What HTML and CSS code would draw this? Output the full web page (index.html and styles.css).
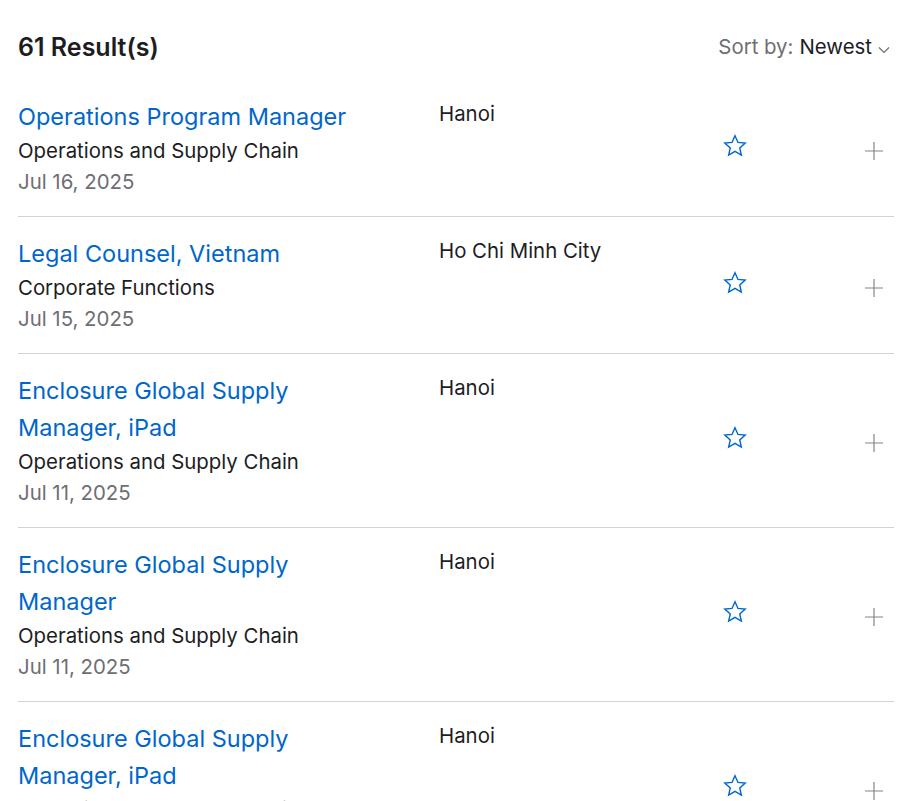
FILE: index.html
```html
<!DOCTYPE html>
<html lang="en">
<head>
  <meta charset="UTF-8" />
  <meta name="viewport" content="width=device-width, initial-scale=1.0"/>
  <title>Results</title>
  <link rel="stylesheet" href="styles.css">
</head>
<body>

<div class="results">
  <!-- Header -->
  <div class="results-head">
    <h2>61 Result(s)</h2>
    <div class="sort">
      <span class="sort-label">Sort by:</span>
      <span class="sort-value">Newest</span>
      <svg class="chevron" width="12" height="8" viewBox="0 0 12 8"><path d="M1 1.5l5 5 5-5" fill="none" stroke="#6e6e73" stroke-width="1.2"/></svg>
    </div>
  </div>

  <!-- Job list -->
  <ul class="job-list">
    <li class="job">
      <div class="job-main">
        <a href="#" class="job-title">Operations Program Manager</a>
        <div class="job-team">Operations and Supply Chain</div>
        <div class="job-date">Jul 16, 2025</div>
      </div>
      <div class="job-location">Hanoi</div>
      <button class="fav" aria-label="Favorite">
        <svg width="26" height="26" viewBox="0 0 24 24"><path d="M12 2.6l2.75 6.1 6.65.62-5 4.45 1.45 6.55L12 16.95 6.15 20.32l1.45-6.55-5-4.45 6.65-.62z" fill="none" stroke="#0066cc" stroke-width="1.3"/></svg>
      </button>
      <button class="expand" aria-label="Expand">
        <svg width="18" height="18" viewBox="0 0 18 18"><path d="M9 0v18M0 9h18" stroke="#86868b" stroke-width="1.2"/></svg>
      </button>
    </li>
    <li class="job">
      <div class="job-main">
        <a href="#" class="job-title">Legal Counsel, Vietnam</a>
        <div class="job-team">Corporate Functions</div>
        <div class="job-date">Jul 15, 2025</div>
      </div>
      <div class="job-location">Ho Chi Minh City</div>
      <button class="fav" aria-label="Favorite">
        <svg width="26" height="26" viewBox="0 0 24 24"><path d="M12 2.6l2.75 6.1 6.65.62-5 4.45 1.45 6.55L12 16.95 6.15 20.32l1.45-6.55-5-4.45 6.65-.62z" fill="none" stroke="#0066cc" stroke-width="1.3"/></svg>
      </button>
      <button class="expand" aria-label="Expand">
        <svg width="18" height="18" viewBox="0 0 18 18"><path d="M9 0v18M0 9h18" stroke="#86868b" stroke-width="1.2"/></svg>
      </button>
    </li>
    <li class="job">
      <div class="job-main">
        <a href="#" class="job-title">Enclosure Global Supply Manager, iPad</a>
        <div class="job-team">Operations and Supply Chain</div>
        <div class="job-date">Jul 11, 2025</div>
      </div>
      <div class="job-location">Hanoi</div>
      <button class="fav" aria-label="Favorite">
        <svg width="26" height="26" viewBox="0 0 24 24"><path d="M12 2.6l2.75 6.1 6.65.62-5 4.45 1.45 6.55L12 16.95 6.15 20.32l1.45-6.55-5-4.45 6.65-.62z" fill="none" stroke="#0066cc" stroke-width="1.3"/></svg>
      </button>
      <button class="expand" aria-label="Expand">
        <svg width="18" height="18" viewBox="0 0 18 18"><path d="M9 0v18M0 9h18" stroke="#86868b" stroke-width="1.2"/></svg>
      </button>
    </li>
    <li class="job">
      <div class="job-main">
        <a href="#" class="job-title">Enclosure Global Supply Manager</a>
        <div class="job-team">Operations and Supply Chain</div>
        <div class="job-date">Jul 11, 2025</div>
      </div>
      <div class="job-location">Hanoi</div>
      <button class="fav" aria-label="Favorite">
        <svg width="26" height="26" viewBox="0 0 24 24"><path d="M12 2.6l2.75 6.1 6.65.62-5 4.45 1.45 6.55L12 16.95 6.15 20.32l1.45-6.55-5-4.45 6.65-.62z" fill="none" stroke="#0066cc" stroke-width="1.3"/></svg>
      </button>
      <button class="expand" aria-label="Expand">
        <svg width="18" height="18" viewBox="0 0 18 18"><path d="M9 0v18M0 9h18" stroke="#86868b" stroke-width="1.2"/></svg>
      </button>
    </li>
    <li class="job">
      <div class="job-main">
        <a href="#" class="job-title">Enclosure Global Supply Manager, iPad</a>
        <div class="job-team">Operations and Supply Chain</div>
        <div class="job-date">Jul 10, 2025</div>
      </div>
      <div class="job-location">Hanoi</div>
      <button class="fav" aria-label="Favorite">
        <svg width="26" height="26" viewBox="0 0 24 24"><path d="M12 2.6l2.75 6.1 6.65.62-5 4.45 1.45 6.55L12 16.95 6.15 20.32l1.45-6.55-5-4.45 6.65-.62z" fill="none" stroke="#0066cc" stroke-width="1.3"/></svg>
      </button>
      <button class="expand" aria-label="Expand">
        <svg width="18" height="18" viewBox="0 0 18 18"><path d="M9 0v18M0 9h18" stroke="#86868b" stroke-width="1.2"/></svg>
      </button>
    </li>
  </ul>
</div>

</body>
</html>
```

FILE: styles.css
```css
* {
  box-sizing: border-box;
}
body {
  margin: 0;
  font-family: Inter, "Noto Sans", sans-serif;
  background: #fff;
  color: #1d1d1f;
  overflow: hidden;
}
.results {
  padding: 0 24px 0 18px;
}
.results-head {
  display: flex;
  justify-content: space-between;
  align-items: center;
  padding: 32px 0 17px;
}
.results-head h2 {
  margin: 0;
  font-size: 25px;
  line-height: 30px;
  font-weight: 600;
}
.sort {
  display: flex;
  align-items: center;
  font-size: 20.4px;
  line-height: 30px;
  padding-right: 4px;
}
.sort-label {
  color: #6e6e73;
  margin-right: 6px;
}
.sort-value {
  color: #1d1d1f;
}
.chevron {
  margin-left: 6px;
  margin-top: 6px;
}
.job-list {
  list-style: none;
  margin: 0;
  padding: 0;
}
.job {
  display: grid;
  grid-template-columns: 421px 276px 40px 1fr;
  align-items: center;
  padding: 19px 0 19px;
  border-bottom: 1px solid #d2d2d7;
}
.job + .job {
  padding-top: 18px;
}
.job-main {
  align-self: start;
}
.job-title {
  display: block;
  color: #06c;
  text-decoration: none;
  font-size: 23.5px;
  line-height: 37px;
  max-width: 345px;
}
.job-team {
  font-size: 20.4px;
  line-height: 31px;
}
.job-date {
  font-size: 20.4px;
  line-height: 31px;
  color: #6e6e73;
}
.job-location {
  align-self: start;
  font-size: 20.4px;
  line-height: 31px;
}
button {
  background: none;
  border: none;
  padding: 0;
  cursor: pointer;
}
.fav {
  display: flex;
  justify-content: center;
  margin-top: -4px;
}
.expand {
  justify-self: end;
  display: flex;
  margin-right: 11px;
  margin-top: 6px;
}
```
